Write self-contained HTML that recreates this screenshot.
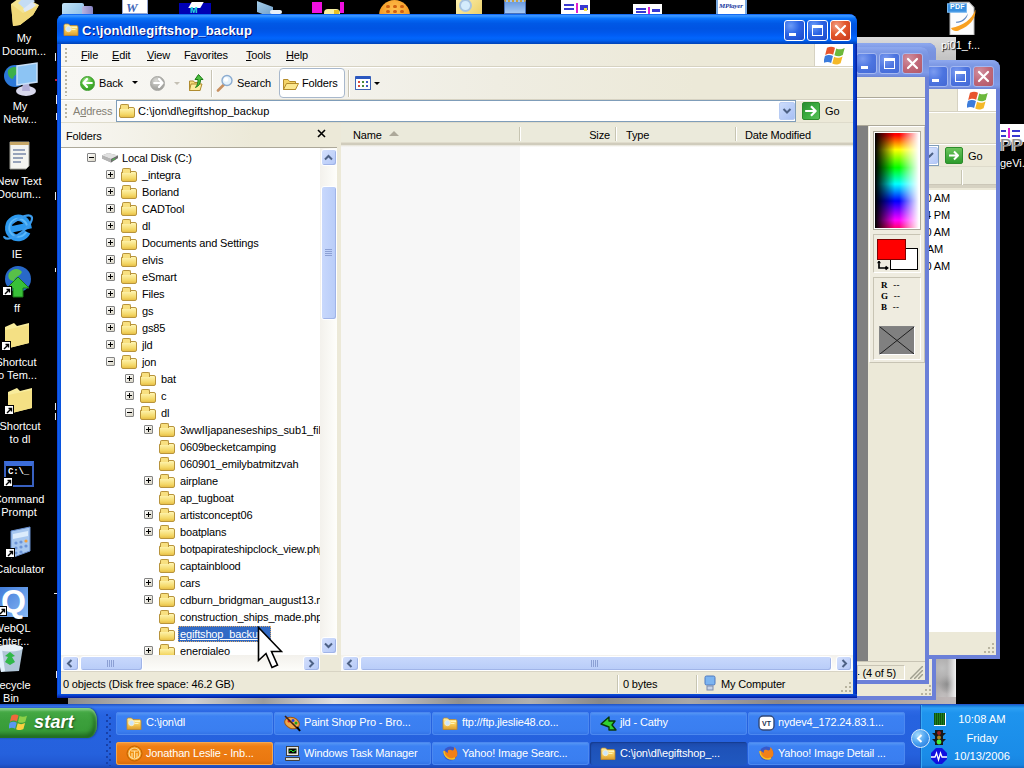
<!DOCTYPE html>
<html>
<head>
<meta charset="utf-8">
<title>C:\jon\dl\egiftshop_backup</title>
<style>
html,body{margin:0;padding:0}
body{width:1024px;height:768px;background:#000;overflow:hidden;position:relative;font:11px "Liberation Sans",sans-serif;color:#000}
div,span,svg,i,b,u.p{position:absolute;box-sizing:border-box}
.g{left:0;top:0;width:0;height:0}
.t{white-space:nowrap;line-height:13px;font-size:11px;letter-spacing:-.15px}
.dl{color:#fff;font-size:11px;line-height:13px;white-space:nowrap}
.pm{width:9px;height:9px;border:1px solid #848484;background:linear-gradient(135deg,#fff,#d8d4c4);border-radius:1px}
.pm i{left:1px;top:3px;width:5px;height:1px;background:#000}
.pm b{left:3px;top:1px;width:1px;height:5px;background:#000}
.fo{width:16px;height:11px;border:1px solid #b8943c;border-radius:2px;background:linear-gradient(#fff6b4,#f4d868 70%,#e8c048)}
.fo:before{content:"";position:absolute;left:0px;top:-4px;width:7px;height:4px;border:1px solid #b8943c;border-bottom:0;border-radius:2px 2px 0 0;background:#f8e080}
.cap{width:21px;height:21px;border:1px solid #fff;border-radius:3px}
.tb{height:27px;border-radius:3px;color:#fff;font-size:11px;background:linear-gradient(#5c9cf4,#3c81f3 18%,#3a7ef0 82%,#3070e4)}
.tb .t{left:34px;top:7px;color:#fff}
</style>
</head>
<body>
<svg width="0" height="0" style="left:0;top:0"><defs><linearGradient id="gf" x1="0" y1="0" x2="0" y2="1"><stop offset="0" stop-color="#fff2a8"/><stop offset=".55" stop-color="#f6cc58"/><stop offset="1" stop-color="#dc9c2c"/></linearGradient></defs></svg>
<!-- DESKTOP -->
<div class="g" id="desktop">
<div style="left:68px;top:37px;width:888px;height:694px;background:linear-gradient(180deg,#dcdcdc 0,#c4c4c4 3%,#a8a8a8 40%,#a09c9c 88%,#b0acac 93%,#a8a4a4 100%)"></div>
<div style="left:936px;top:659px;width:20px;height:46px;background:linear-gradient(90deg,rgba(255,255,255,0) 55%,rgba(255,255,255,.85) 100%),radial-gradient(circle at 30% 20%,#c0c0c0 0,rgba(192,192,192,0) 40%),radial-gradient(circle at 60% 55%,#8c8c8c 0,rgba(140,140,140,0) 35%),radial-gradient(circle at 35% 85%,#c4c0c0 0,rgba(196,192,192,0) 40%),#a8a6a6"></div>
<div style="left:68px;top:697px;width:888px;height:8px;background:linear-gradient(90deg,#8c8c8c 0,#b4b4b4 8%,#d0d0d0 14%,#9c9c9c 22%,#e0e0e0 30%,#c4c4c4 36%,#909090 44%,#b0b0b0 52%,#888 60%,#a8a8a8 70%,#8c8888 80%,#a49c9c 90%,#c0b8b8 100%)"></div>
<div style="left:62px;top:3px;width:22px;height:12px;background:linear-gradient(135deg,#c4e4f8,#8cc0e8);border-radius:2px 2px 0 0"></div><div style="left:82px;top:6px;width:11px;height:9px;background:linear-gradient(90deg,#b8b4e0,#8884c4);border-radius:2px 2px 0 0"></div>
<div style="left:122px;top:0;width:26px;height:14px;background:#fff;border:1px solid #98a8d0;border-top:0"></div><div class="t" style="left:126px;top:1px;font:italic bold 13px/13px 'Liberation Serif',serif;color:#4468b8">W</div>
<div style="left:179px;top:3px;width:32px;height:11px;background:#0000b4"></div><div style="left:190px;top:2px;width:12px;height:6px;background:#fff;transform:skewX(-30deg)"></div><div class="t" style="left:190px;top:6px;font:bold 9px/9px 'Liberation Sans',sans-serif;color:#28e0e0">M</div>
<div style="left:257px;top:4px;width:16px;height:11px;background:linear-gradient(135deg,#a4cce8,#6c9cc8);transform:skewY(20deg)"></div><div style="left:270px;top:10px;width:12px;height:4px;background:#e8f0f8;border-radius:2px"></div>
<div style="left:312px;top:2px;width:10px;height:11px;background:#f010e0"></div><div style="left:340px;top:2px;width:4px;height:11px;background:#f010e0"></div><div style="left:324px;top:9px;width:16px;height:5px;background:#f8f0a0;border-radius:4px 4px 0 0"></div><div style="left:334px;top:10px;width:5px;height:4px;background:#e8c020"></div>
<div style="left:379px;top:0;width:31px;height:31px;border-radius:16px;background:radial-gradient(circle at 50% 30%,#ffc050,#f49820 60%,#e88010)"></div>
<i style="left:386px;top:5px;width:4px;height:3px;background:#d06010;border-radius:2px"></i><i style="left:386px;top:10px;width:4px;height:3px;background:#d06010;border-radius:2px"></i>
<i style="left:393px;top:5px;width:4px;height:3px;background:#d06010;border-radius:2px"></i><i style="left:393px;top:10px;width:4px;height:3px;background:#d06010;border-radius:2px"></i>
<i style="left:400px;top:5px;width:4px;height:3px;background:#d06010;border-radius:2px"></i><i style="left:400px;top:10px;width:4px;height:3px;background:#d06010;border-radius:2px"></i>
<div style="left:456px;top:0;width:26px;height:14px;background:linear-gradient(135deg,#fcf0b0,#ecd068)"></div><div style="left:459px;top:-1px;width:13px;height:13px;border-radius:7px;background:#d4ecfc;border:2px solid #a8c4e0"></div>
<div style="left:504px;top:0;width:22px;height:14px;background:linear-gradient(#6c9ce0,#a4c8f4);border:1px solid #4870b8;border-top:2px dotted #c8a040"></div>
<div style="left:561px;top:0;width:29px;height:14px;background:#fff;border-top:3px solid #fff"></div><div style="left:564px;top:4px;width:10px;height:2px;background:#3838d0"></div><div style="left:564px;top:8px;width:10px;height:2px;background:#3838d0"></div><div style="left:576px;top:3px;width:2px;height:10px;background:#e020d0"></div><div style="left:580px;top:5px;width:8px;height:5px;background:#3838d0"></div><div style="left:584px;top:8px;width:3px;height:3px;background:#f0e040"></div>
<div style="left:633px;top:4px;width:29px;height:10px;background:#fff"></div><div style="left:636px;top:8px;width:10px;height:2px;background:#3838d0"></div><div style="left:636px;top:11px;width:10px;height:2px;background:#3838d0"></div><div style="left:648px;top:7px;width:2px;height:7px;background:#e020d0"></div><div style="left:652px;top:9px;width:8px;height:3px;background:#3838d0"></div>
<div style="left:716px;top:0;width:31px;height:14px;background:#fff;border:2px solid #78a8e0;border-top:0;border-bottom:0"></div><div class="t" style="left:719px;top:2px;font:italic bold 7px/8px 'Liberation Serif',serif;color:#1838a0">MPlayer</div>
<svg style="left:8px;top:-6px" width="34" height="34" viewBox="0 0 34 34"><path d="M3 10l11-8l17 9l-6 10l-13 10l-7 1z" fill="#f4e490"/><path d="M10 9l8-8l9 6l-9 9z" fill="#c4dcf4"/><path d="M15 15l9-7l4 3l-10 9z" fill="#dce8f8"/><path d="M3 10l12 9l16-8l-6 10l-13 10l-7 1z" fill="#f0d878"/></svg>
<div class="dl" style="left:-26px;top:32px;width:100px;text-align:center">My</div>
<div class="dl" style="left:-26px;top:45px;width:100px;text-align:center">Docum...</div>
<svg style="left:3px;top:62px" width="36" height="36" viewBox="0 0 36 36"><circle cx="12" cy="14" r="11" fill="#2c78d8"/><path d="M5 8c4-4 9-4 11 0c-1 5-5 4-6 9c-3 0-6-4-5-9z" fill="#3cb048"/><ellipse cx="23" cy="29" rx="10" ry="5" fill="#d8d8ec"/><path d="M20 20h6l1 9h-8z" fill="#b4b0d8"/><path d="M14 4l20-3v19l-20 3z" fill="#8cc4f4" stroke="#c8e0f8" stroke-width="1.500"/></svg>
<div class="dl" style="left:-30px;top:100px;width:100px;text-align:center">My</div>
<div class="dl" style="left:-30px;top:113px;width:100px;text-align:center">Netw...</div>
<svg style="left:8px;top:139px" width="24" height="31" viewBox="0 0 24 31"><path d="M2 3h19v24l-3 3h-16z" fill="#f4f4f0" stroke="#a0a098"/><path d="M2 3h19v3h-19z" fill="#c8a868"/><path d="M5 11h12M5 15h13M5 19h10M5 23h8" stroke="#7888a8" stroke-width="1.500"/></svg>
<div class="dl" style="left:-31px;top:175px;width:100px;text-align:center">New Text</div>
<div class="dl" style="left:-31px;top:188px;width:100px;text-align:center">Docum...</div>
<svg style="left:1px;top:210px" width="34" height="35" viewBox="0 0 34 35"><g transform="rotate(-12 17 19)"><path d="M25.500 24A10 10 0 1 1 27.500 18H9.500" stroke="#2c98ee" stroke-width="6.500" fill="none"/><path d="M24.500 23.500A9 9 0 1 1 26.500 17.500" stroke="#5cb8f8" stroke-width="2" fill="none"/></g><ellipse cx="17" cy="17" rx="17" ry="6.500" transform="rotate(-38 17 17)" fill="none" stroke="#3c9cec" stroke-width="2.200" stroke-dasharray="40 16 60"/></svg>
<div class="dl" style="left:-33px;top:248px;width:100px;text-align:center">IE</div>
<svg style="left:1px;top:265px" width="32" height="34" viewBox="0 0 32 34"><circle cx="17" cy="14" r="13" fill="#2868c8"/><path d="M8 8c4-5 10-5 13-1c-2 5-7 4-8 9c-4 0-7-3-5-8z" fill="#58c048"/><path d="M17 12l11 11h-6v9h-10v-9h-6z" fill="#38c038" stroke="#187818"/></svg>
<div style="left:2px;top:286px;width:10px;height:10px;background:#fff;border:1px solid #000"></div><svg style="left:4px;top:288px" width="7" height="7" viewBox="0 0 7 7"><path d="M1 6L5 2M2.500 1.500h3v3" stroke="#000" stroke-width="1.400" fill="none"/></svg>
<div class="dl" style="left:-33px;top:302px;width:100px;text-align:center">ff</div>
<svg style="left:3px;top:321px" width="28" height="29" viewBox="0 0 28 29"><path d="M2 6l9-4l3 3l12-3v20l-24 6z" fill="#f8ec9c"/><path d="M2 9l24-5v18l-24 6z" fill="#f4e084"/></svg>
<div style="left:1px;top:341px;width:10px;height:10px;background:#fff;border:1px solid #000"></div><svg style="left:3px;top:343px" width="7" height="7" viewBox="0 0 7 7"><path d="M1 6L5 2M2.500 1.500h3v3" stroke="#000" stroke-width="1.400" fill="none"/></svg>
<div class="dl" style="left:-34px;top:356px;width:100px;text-align:center">Shortcut</div>
<div class="dl" style="left:-34px;top:369px;width:100px;text-align:center">to Tem...</div>
<svg style="left:6px;top:386px" width="28" height="29" viewBox="0 0 28 29"><path d="M2 6l9-4l3 3l12-3v20l-24 6z" fill="#f8ec9c"/><path d="M2 9l24-5v18l-24 6z" fill="#f4e084"/></svg>
<div style="left:4px;top:405px;width:10px;height:10px;background:#fff;border:1px solid #000"></div><svg style="left:6px;top:407px" width="7" height="7" viewBox="0 0 7 7"><path d="M1 6L5 2M2.500 1.500h3v3" stroke="#000" stroke-width="1.400" fill="none"/></svg>
<div class="dl" style="left:-30px;top:420px;width:100px;text-align:center">Shortcut</div>
<div class="dl" style="left:-30px;top:433px;width:100px;text-align:center">to dl</div>
<div style="left:4px;top:461px;width:30px;height:26px;background:#000;border:2px solid #3860c0;border-top:5px solid #3c6cd8"></div><div class="t" style="left:8px;top:467px;color:#fff;font:bold 9px/11px 'Liberation Mono',monospace">C:\_</div>
<div style="left:3px;top:477px;width:10px;height:10px;background:#fff;border:1px solid #000"></div><svg style="left:5px;top:479px" width="7" height="7" viewBox="0 0 7 7"><path d="M1 6L5 2M2.500 1.500h3v3" stroke="#000" stroke-width="1.400" fill="none"/></svg>
<div class="dl" style="left:-31px;top:493px;width:100px;text-align:center">Command</div>
<div class="dl" style="left:-31px;top:506px;width:100px;text-align:center">Prompt</div>
<svg style="left:9px;top:526px" width="24" height="33" viewBox="0 0 24 33"><path d="M2 5l19-4v24l-19 7z" fill="#a8c8f0" stroke="#6890d0"/><path d="M4 8l15-3v5l-15 3z" fill="#dcecfc"/><g fill="#6c94d8"><circle cx="7" cy="17" r="1.600"/><circle cx="12" cy="16" r="1.600"/><circle cx="17" cy="15" r="1.600" fill="#f0a040"/><circle cx="7" cy="22" r="1.600"/><circle cx="12" cy="21" r="1.600"/><circle cx="17" cy="20" r="1.600"/><circle cx="7" cy="27" r="1.600"/><circle cx="12" cy="26" r="1.600"/></g></svg>
<div style="left:5px;top:548px;width:10px;height:10px;background:#fff;border:1px solid #000"></div><svg style="left:7px;top:550px" width="7" height="7" viewBox="0 0 7 7"><path d="M1 6L5 2M2.500 1.500h3v3" stroke="#000" stroke-width="1.400" fill="none"/></svg>
<div class="dl" style="left:-30px;top:563px;width:100px;text-align:center">Calculator</div>
<div style="left:-4px;top:587px;width:32px;height:30px;background:linear-gradient(135deg,#3c78d8,#88b8f4)"></div><div class="t" style="left:1px;top:585px;color:#fff;font:bold 32px/32px 'Liberation Sans',sans-serif">Q</div>
<div style="left:-3px;top:606px;width:10px;height:10px;background:#fff;border:1px solid #000"></div><svg style="left:-1px;top:608px" width="7" height="7" viewBox="0 0 7 7"><path d="M1 6L5 2M2.500 1.500h3v3" stroke="#000" stroke-width="1.400" fill="none"/></svg>
<div class="dl" style="left:-38px;top:622px;width:100px;text-align:center">WebQL</div>
<div class="dl" style="left:-38px;top:635px;width:100px;text-align:center">Enter...</div>
<svg style="left:-6px;top:643px" width="32" height="32" viewBox="0 0 32 32"><path d="M3 6l26-2l-4 24l-18 1z" fill="#c4dcf0" opacity=".9"/><ellipse cx="16" cy="5" rx="13" ry="3.500" fill="#e8f0f8"/><path d="M11 13l5-4l5 4l-3 1l3 5l-5 3l-5-3l3-5z" fill="#30b848"/><path d="M3 6l4 23l4-1l-3-22z" fill="#e4f0fc"/></svg>
<div class="dl" style="left:-39px;top:679px;width:100px;text-align:center">Recycle</div>
<div class="dl" style="left:-39px;top:692px;width:100px;text-align:center">Bin</div>
<i style="left:55px;top:53px;width:1px;height:8px;background:#e8e8e8"></i>
<i style="left:56px;top:95px;width:1px;height:9px;background:#e8e8e8"></i>
<i style="left:56px;top:113px;width:1px;height:7px;background:#e8e8e8"></i>
<i style="left:55px;top:192px;width:1px;height:8px;background:#e8e8e8"></i>
<i style="left:55px;top:268px;width:1px;height:4px;background:#e8e8e8"></i>
<i style="left:55px;top:403px;width:1px;height:7px;background:#e8e8e8"></i>
<i style="left:55px;top:413px;width:1px;height:7px;background:#e8e8e8"></i>
<i style="left:56px;top:671px;width:1px;height:7px;background:#e8e8e8"></i>
<i style="left:55px;top:79px;width:2px;height:2px;background:#c02040"></i><i style="left:54px;top:593px;width:3px;height:1px;background:#e8e8e8"></i>
<svg style="left:946px;top:-1px" width="34" height="36" viewBox="0 -1.500 34 34" preserveAspectRatio="none"><path d="M4 1.500h19l5 5v26h-24z" fill="#fcfcfc" stroke="#b8b8b8"/><path d="M5 26c2 4 7 3 9 1.500c9-3 16-10 15.500-19c-4 10-12 15-24.500 17.500z" fill="#f8a020"/><path d="M10 20c6 0 10-4 12-8c-1 6-6 9-12 9z" fill="#6088c0"/><rect x="1.500" y="3" width="19" height="8" fill="#3890e0" stroke="#78b8f0"/></svg>
<div class="t" style="left:950px;top:3px;color:#fff;font:bold 7px/8px 'Liberation Sans',sans-serif;letter-spacing:.3px">PDF</div>
<div class="dl" style="left:941px;top:39px;text-shadow:1px 1px 1px #000">pi01_f...</div>
<div style="left:1000px;top:124px;width:24px;height:18px;background:#fff;border-top:2px solid #fff"></div><div style="left:1001px;top:130px;width:5px;height:2px;background:#3838d0"></div><div style="left:1001px;top:135px;width:5px;height:2px;background:#3838d0"></div><div style="left:1008px;top:128px;width:2px;height:10px;background:#e020d0"></div><div style="left:1012px;top:130px;width:8px;height:2px;background:#3838d0"></div><div style="left:1012px;top:135px;width:8px;height:2px;background:#3838d0"></div>
<div class="t" style="left:1000px;top:137px;color:#8c8c8c;font:17px/17px 'Liberation Sans',sans-serif;text-shadow:1px 0 0 #e0e0e0,-1px 0 0 #e0e0e0">PP</div>
<div class="dl" style="left:1000px;top:157px">geVi...</div>
</div>
<!-- BACKGROUND WINDOWS -->
<div class="g" id="back">
<div style="left:700px;top:43px;width:236px;height:657px;border-radius:8px 8px 0 0;background:#6b80d8"></div>
<div style="left:700px;top:43px;width:236px;height:30px;border-radius:8px 8px 0 0;background:linear-gradient(#8ca8ee 0,#8aa4ec 6%,#7f9be6 14%,#7994e0 30%,#7791de 50%,#7a96e2 70%,#7e9ae8 85%,#7690e0 94%,#6c84d4 100%)"></div>
<div style="left:704px;top:73px;width:228px;height:623px;background:#ece9d8"></div>
<i style="left:929px;top:685px;width:2px;height:2px;background:#b8b4a0"></i>
<i style="left:925px;top:689px;width:2px;height:2px;background:#b8b4a0"></i>
<i style="left:929px;top:689px;width:2px;height:2px;background:#b8b4a0"></i>
<i style="left:921px;top:693px;width:2px;height:2px;background:#b8b4a0"></i>
<i style="left:925px;top:693px;width:2px;height:2px;background:#b8b4a0"></i>
<i style="left:929px;top:693px;width:2px;height:2px;background:#b8b4a0"></i>
<div style="left:800px;top:60px;width:200px;height:599px;border-radius:8px 8px 0 0;background:#6b80d8"></div>
<div style="left:800px;top:60px;width:200px;height:29px;border-radius:8px 8px 0 0;background:linear-gradient(#8ca8ee 0,#8aa4ec 6%,#7f9be6 14%,#7994e0 30%,#7791de 50%,#7a96e2 70%,#7e9ae8 85%,#7690e0 94%,#6c84d4 100%)"></div>
<div class="cap" style="left:973px;top:66px;background:radial-gradient(circle at 30% 25%,#d090a0 0,#c06878 50%,#b05868 100%);border-color:#a4b8f0"><svg style="left:3px;top:3px" width="13" height="13" viewBox="0 0 13 13"><path d="M2 2l9 9M11 2l-9 9" stroke="#fff" stroke-width="2.200" stroke-linecap="round"/></svg></div><div class="cap" style="left:950px;top:66px;background:radial-gradient(circle at 30% 25%,#7c9cf0 0,#4c74e0 50%,#4468d4 100%);border-color:#a4b8f0"><i style="left:4px;top:4px;width:11px;height:11px;border:1px solid #fff;border-top-width:3px"></i></div><div class="cap" style="left:927px;top:66px;background:radial-gradient(circle at 30% 25%,#7c9cf0 0,#4c74e0 50%,#4468d4 100%);border-color:#a4b8f0"><i style="left:4px;top:12px;width:7px;height:3px;background:#fff"></i></div>
<div style="left:804px;top:89px;width:192px;height:566px;background:#ece9d8"></div>
<div style="left:957px;top:89px;width:39px;height:22px;background:#fff;border-left:1px solid #d6d2c2"></div>
<svg style="left:967px;top:90px" width="22" height="20" viewBox="0 0 19 17.500"><path d="M2.500 2.500c3-1.500 5-1 7 0l-1.600 6c-2-1-4-1.400-7 .2z" fill="#e8552c"/><path d="M10.600 3c2 1 4.500 1.300 7.400-.3l-1.700 6c-3 1.600-5 1.200-7.300.2z" fill="#6cb83c"/><path d="M.700 9.700c3-1.500 5-1.100 7 0l-1.600 6c-2-1-4-1.400-7 .2z" fill="#3c7cdc"/><path d="M8.700 10.300c2 1 4.500 1.300 7.400-.3l-1.700 6c-3 1.600-5 1.200-7.300.2z" fill="#f4b828"/></svg>
<div style="left:804px;top:111px;width:192px;height:1px;background:#d6d2c2"></div><div style="left:804px;top:112px;width:192px;height:1px;background:#fff"></div>
<div style="left:804px;top:143px;width:192px;height:1px;background:#d6d2c2"></div><div style="left:804px;top:144px;width:192px;height:1px;background:#fff"></div>
<div style="left:804px;top:145px;width:135px;height:21px;border:1px solid #7f9db9;background:#fff"></div>
<div style="left:921px;top:147px;width:17px;height:17px;border-radius:2px;border:1px solid #b4c8f4;background:linear-gradient(135deg,#e0e8fc,#b4c8f8)"></div>
<svg style="left:925px;top:152px" width="9" height="7" viewBox="0 0 9 7"><path d="M1 1l3.500 3.500L8 1" stroke="#4d6185" stroke-width="2" fill="none"/></svg>
<div style="left:945px;top:147px;width:18px;height:17px;border-radius:2px;border:1px solid #2c8c2c;background:linear-gradient(#6cc45c,#2c9c2c)"></div>
<svg style="left:948px;top:150px" width="12" height="11" viewBox="0 0 12 11"><path d="M1 5.500h9M6 1.500l4 4l-4 4" stroke="#fff" stroke-width="2" fill="none" stroke-linejoin="round"/></svg>
<div class="t" style="left:968px;top:150px">Go</div>
<div style="left:804px;top:166px;width:192px;height:1px;background:#dedbcb"></div>
<div style="left:804px;top:167px;width:192px;height:21px;background:#ebeadb;border-bottom:3px solid #d6d2c2;box-shadow:inset 0 -1px 0 #cbc7b8"></div>
<div style="left:961px;top:170px;width:1px;height:15px;background:#c7c5b2"></div><div style="left:962px;top:170px;width:1px;height:15px;background:#fff"></div>
<div style="left:804px;top:190px;width:192px;height:442px;background:#fff"></div>
<div class="t" style="left:890px;top:192px;width:60px;text-align:right">10:00 AM</div>
<div class="t" style="left:890px;top:209px;width:60px;text-align:right">12:34 PM</div>
<div class="t" style="left:890px;top:226px;width:60px;text-align:right">10:00 AM</div>
<div class="t" style="left:883px;top:243px;width:60px;text-align:right">9:10 AM</div>
<div class="t" style="left:890px;top:260px;width:60px;text-align:right">10:00 AM</div>
<i style="left:992px;top:643px;width:2px;height:2px;background:#b8b4a0"></i>
<i style="left:988px;top:647px;width:2px;height:2px;background:#b8b4a0"></i>
<i style="left:992px;top:647px;width:2px;height:2px;background:#b8b4a0"></i>
<i style="left:984px;top:651px;width:2px;height:2px;background:#b8b4a0"></i>
<i style="left:988px;top:651px;width:2px;height:2px;background:#b8b4a0"></i>
<i style="left:992px;top:651px;width:2px;height:2px;background:#b8b4a0"></i>
<div style="left:740px;top:47px;width:189px;height:637px;border-radius:8px 8px 0 0;background:#6b80d8"></div>
<div style="left:740px;top:47px;width:189px;height:30px;border-radius:8px 8px 0 0;background:linear-gradient(#8ca8ee 0,#8aa4ec 6%,#7f9be6 14%,#7994e0 30%,#7791de 50%,#7a96e2 70%,#7e9ae8 85%,#7690e0 94%,#6c84d4 100%)"></div>
<div class="cap" style="left:902px;top:53px;background:radial-gradient(circle at 30% 25%,#d090a0 0,#c06878 50%,#b05868 100%);border-color:#a4b8f0"><svg style="left:3px;top:3px" width="13" height="13" viewBox="0 0 13 13"><path d="M2 2l9 9M11 2l-9 9" stroke="#fff" stroke-width="2.200" stroke-linecap="round"/></svg></div><div class="cap" style="left:879px;top:53px;background:radial-gradient(circle at 30% 25%,#7c9cf0 0,#4c74e0 50%,#4468d4 100%);border-color:#a4b8f0"><i style="left:4px;top:4px;width:11px;height:11px;border:1px solid #fff;border-top-width:3px"></i></div><div class="cap" style="left:856px;top:53px;background:radial-gradient(circle at 30% 25%,#7c9cf0 0,#4c74e0 50%,#4468d4 100%);border-color:#a4b8f0"><i style="left:4px;top:12px;width:7px;height:3px;background:#fff"></i></div>
<div style="left:744px;top:77px;width:181px;height:603px;background:#ece9d8"></div>
<div style="left:744px;top:97px;width:181px;height:1px;background:#aca899"></div><div style="left:744px;top:98px;width:181px;height:1px;background:#fff"></div>
<div style="left:744px;top:125px;width:181px;height:1px;background:#aca899"></div>
<div style="left:744px;top:126px;width:124px;height:535px;background:#808080"></div>
<div style="left:869px;top:126px;width:56px;height:237px;background:#efece0;border:1px solid #fff;border-right-color:#c8c4b4;border-bottom-color:#c8c4b4"></div>
<div style="left:873px;top:131px;width:48px;height:99px;border:1px solid #aca899;background:#fff"></div>
<div style="left:875px;top:133px;width:44px;height:95px;background:linear-gradient(90deg,#000 0,rgba(0,0,0,0) 45%,rgba(255,255,255,0) 55%,#fff 100%),linear-gradient(180deg,#f00 0,#f00 2%,#ff0 17.600%,#0f0 36.500%,#0ff 53.700%,#00f 71.600%,#f0f 91.600%,#ff0070 100%)"></div>
<div style="left:873px;top:234px;width:48px;height:39px;border:1px solid #c8c4b4;border-right-color:#fff;border-bottom-color:#fff"></div>
<div style="left:890px;top:248px;width:28px;height:22px;background:#fff;border:1px solid #000"></div>
<div style="left:877px;top:239px;width:29px;height:21px;background:#f00;border:1px solid #800000"></div>
<svg style="left:877px;top:261px" width="12" height="10" viewBox="0 0 12 10"><path d="M2 1v6h8M1 2.500l1-2l1 2M8.500 5.500l2 1.500l-2 1.500" stroke="#000" stroke-width="1.700" fill="none"/></svg>
<div style="left:873px;top:277px;width:48px;height:83px;border:1px solid #c8c4b4;border-right-color:#fff;border-bottom-color:#fff"></div>
<div class="t" style="left:881px;top:280px;font:bold 9px/11px 'Liberation Serif',serif;letter-spacing:.4px">R&nbsp; --</div>
<div class="t" style="left:881px;top:291px;font:bold 9px/11px 'Liberation Serif',serif;letter-spacing:.4px">G&nbsp; --</div>
<div class="t" style="left:881px;top:302px;font:bold 9px/11px 'Liberation Serif',serif;letter-spacing:.4px">B&nbsp; --</div>
<div style="left:879px;top:326px;width:36px;height:29px;background:#808080;border:1px solid #fff;border-top-color:#848484;border-left-color:#848484"></div>
<svg style="left:880px;top:327px" width="34" height="27" viewBox="0 0 34 27"><path d="M0 0L34 27M34 0L0 27" stroke="#202020" stroke-width="1"/></svg>
<div style="left:744px;top:661px;width:181px;height:19px;background:#ece9d8;border-top:1px solid #c8c4b4"></div>
<div class="t" style="left:856px;top:667px">- (4 of 5)</div>
<div style="left:857px;top:665px;width:48px;height:15px;border:1px solid #c8c4b4;border-right-color:#fff;border-bottom-color:#fff"></div>
<svg style="left:910px;top:666px" width="13" height="13" viewBox="0 0 13 13"><path d="M13 0L0 13" stroke="#a0a090" stroke-width="1.500"/></svg>
<svg style="left:914px;top:670px" width="9" height="9" viewBox="0 0 9 9"><path d="M9 0L0 9" stroke="#a0a090" stroke-width="1.500"/></svg>
<svg style="left:918px;top:674px" width="5" height="5" viewBox="0 0 5 5"><path d="M5 0L0 5" stroke="#a0a090" stroke-width="1.500"/></svg>
</div>
<!-- MAIN WINDOW -->
<div class="g" id="win">
<div style="left:57px;top:14px;width:800px;height:684px;border-radius:8px 8px 0 0;background:#0831d9"></div>
<div style="left:57px;top:44px;width:4px;height:654px;background:linear-gradient(90deg,#0831d9,#1262ec 30%,#0a58e2 70%,#0852de)"></div>
<div style="left:853px;top:44px;width:4px;height:654px;background:linear-gradient(90deg,#0a52dc,#0840cc 35%,#062cb8 70%,#001c9c)"></div>
<div style="left:57px;top:694px;width:800px;height:4px;background:linear-gradient(#0a52dc,#0840cc 35%,#062cb8 70%,#001c9c)"></div>
<div style="left:57px;top:14px;width:800px;height:30px;border-radius:8px 8px 0 0;background:linear-gradient(#0058ee 0,#3a94ff 5%,#2b8dff 9%,#0c76fc 14%,#0364f0 22%,#0058e6 32%,#0054e3 48%,#0057ea 60%,#005cf4 70%,#0265fc 80%,#0060f0 88%,#0050d4 94%,#0042b4 100%)"></div>
<svg style="left:63px;top:22px" width="16" height="15" viewBox="0 0 16 15"><path d="M1 3.500q0-1.500 1.500-1.500h3l1.500 1.500h6.500q1.500 0 1.500 1.500v8.500h-14z" fill="url(#gf)" stroke="#c08828" stroke-width=".8"/><path d="M8.500 5.500h5.500M8.500 7.500h4" stroke="#fff4b8" stroke-width="1"/><circle cx="5.500" cy="7" r="2.700" fill="#cce6fa" stroke="#f4ecd0" stroke-width="1"/></svg>
<div class="t" style="left:82px;top:23px;color:#fff;font:bold 13px/15px 'Liberation Sans',sans-serif;text-shadow:1px 1px 0 #0a1883;letter-spacing:.12px">C:\jon\dl\egiftshop_backup</div>
<div class="cap" style="left:784px;top:20px;background:radial-gradient(circle at 30% 25%,#6c9cf8 0,#2c64e4 45%,#1c48c8 100%)">
<i style="left:4px;top:12px;width:7px;height:3px;background:#fff"></i>
</div>
<div class="cap" style="left:807px;top:20px;background:radial-gradient(circle at 30% 25%,#6c9cf8 0,#2c64e4 45%,#1c48c8 100%)">
<i style="left:4px;top:4px;width:11px;height:11px;border:1px solid #fff;border-top-width:3px"></i>
</div>
<div class="cap" style="left:830px;top:20px;background:radial-gradient(circle at 30% 25%,#f0a088 0,#e4582c 45%,#c4361c 100%)">
<svg style="left:3px;top:3px" width="13" height="13" viewBox="0 0 13 13"><path d="M2 2l9 9M11 2l-9 9" stroke="#fff" stroke-width="2.2" stroke-linecap="round"/></svg>
</div>
<div style="left:61px;top:44px;width:792px;height:650px;background:#ece9d8"></div>
<div style="left:61px;top:44px;width:792px;height:79px;background:linear-gradient(90deg,#f8f7f3 0,#f4f3ee 30%,#efede2 55%,#ece9d8 80%)"></div>
<div style="left:61px;top:66px;width:792px;height:1px;background:#d6d2c2"></div>
<div style="left:61px;top:67px;width:792px;height:1px;background:#fff"></div>
<div style="left:61px;top:99px;width:792px;height:1px;background:#d6d2c2"></div>
<div style="left:61px;top:100px;width:792px;height:1px;background:#fff"></div>
<div style="left:65px;top:48px;width:2px;height:15px;background:repeating-linear-gradient(#bab6a4 0,#bab6a4 2px,transparent 2px,transparent 4px)"></div>
<div style="left:65px;top:71px;width:2px;height:25px;background:repeating-linear-gradient(#bab6a4 0,#bab6a4 2px,transparent 2px,transparent 4px)"></div>
<div style="left:65px;top:104px;width:2px;height:15px;background:repeating-linear-gradient(#bab6a4 0,#bab6a4 2px,transparent 2px,transparent 4px)"></div>
<div class="t" style="left:81px;top:49px"><u>F</u>ile</div>
<div class="t" style="left:112px;top:49px"><u>E</u>dit</div>
<div class="t" style="left:147px;top:49px"><u>V</u>iew</div>
<div class="t" style="left:184px;top:49px">F<u>a</u>vorites</div>
<div class="t" style="left:246px;top:49px"><u>T</u>ools</div>
<div class="t" style="left:286px;top:49px"><u>H</u>elp</div>
<div style="left:814px;top:44px;width:39px;height:22px;background:#fff;border-left:1px solid #d6d2c2"></div>
<svg style="left:824px;top:45px" width="22" height="20" viewBox="0 0 19 17.500"><path d="M2.5 2.5c3-1.5 5-1 7 0l-1.6 6c-2-1-4-1.4-7 .2z" fill="#e8552c"/><path d="M10.6 3c2 1 4.5 1.3 7.4-.3l-1.7 6c-3 1.600-5 1.200-7.300.2z" fill="#6cb83c"/><path d="M.7 9.700c3-1.500 5-1.100 7 0l-1.600 6c-2-1-4-1.400-7 .2z" fill="#3c7cdc"/><path d="M8.700 10.300c2 1 4.500 1.300 7.400-.3l-1.700 6c-3 1.600-5 1.200-7.300.2z" fill="#f4b828"/></svg>
<div style="left:80px;top:76px;width:15px;height:15px;border-radius:8px;background:radial-gradient(circle at 40% 30%,#b4ec9c 0,#4cb834 45%,#2c8c1c 100%);border:1px solid #3c9c2c"></div>
<svg style="left:82px;top:78px" width="11" height="10" viewBox="0 0 11 10"><path d="M5 1L1.500 5L5 9M1.800 5h8" stroke="#fff" stroke-width="2.200" fill="none" stroke-linejoin="round" stroke-linecap="round"/></svg>
<div class="t" style="left:99px;top:77px">Back</div>
<div style="left:132px;top:81px;width:0;height:0;border:3px solid transparent;border-top:3px solid #000;border-bottom:0"></div>
<div style="left:150px;top:76px;width:15px;height:15px;border-radius:8px;background:radial-gradient(circle at 40% 30%,#dcdcd8 0,#acaca8 55%,#989894 100%);border:1px solid #a4a4a0"></div>
<svg style="left:153px;top:78px" width="11" height="10" viewBox="0 0 11 10"><path d="M6 1L9.500 5L6 9M9.200 5h-8" stroke="#fff" stroke-width="2.200" fill="none" stroke-linejoin="round" stroke-linecap="round"/></svg>
<div style="left:174px;top:82px;width:0;height:0;border:3px solid transparent;border-top:3px solid #c4c0b4;border-bottom:0"></div>
<svg style="left:188px;top:73px" width="17" height="19" viewBox="0 0 17 19"><path d="M1.500 8h4l1 1.500h5.500v8h-10.500z" fill="#f4dc78" stroke="#b08c30"/><path d="M3 11h11l-2 6.500h-10.500z" fill="#fcec9c" stroke="#b08c30"/><path d="M10.500 1.500l4.500 5h-2.500c0 4-1.500 6.500-5 8c2-2.500 2.500-4.500 2.500-8h-3z" fill="#4cc040" stroke="#1c7c14"/></svg>
<div style="left:211px;top:70px;width:1px;height:27px;background:#c8c4b4"></div>
<div style="left:212px;top:70px;width:1px;height:27px;background:#fff"></div>
<svg style="left:216px;top:74px" width="18" height="18" viewBox="0 0 18 18"><path d="M8 10.500L2 16.500" stroke="#c89060" stroke-width="2.600" stroke-linecap="round"/><circle cx="11" cy="6.500" r="5" fill="#e4f2fc" stroke="#8cacd0" stroke-width="1.400"/><circle cx="10" cy="5.500" r="2.200" fill="#fff"/></svg>
<div class="t" style="left:237px;top:77px">Search</div>
<div style="left:279px;top:68px;width:66px;height:30px;border:1px solid #a8b8cc;border-radius:4px;background:#fff"></div>
<svg style="left:282px;top:76px" width="18" height="16" viewBox="0 0 18 16"><path d="M1.500 3.500h4.500l1.500 2h6v8h-12z" fill="#f4d468" stroke="#b48c2c"/><path d="M4.500 7.500h12l-3 6h-12z" fill="#fce890" stroke="#b48c2c"/></svg>
<div class="t" style="left:302px;top:77px">Folders</div>
<div style="left:348px;top:70px;width:1px;height:27px;background:#c8c4b4"></div>
<div style="left:349px;top:70px;width:1px;height:27px;background:#fff"></div>
<div style="left:355px;top:76px;width:16px;height:14px;border:1px solid #3c64b4;border-top:3px solid #2c58c0;border-radius:1px;background:#fff"></div>
<i style="left:358px;top:81px;width:2px;height:2px;background:#d84c3c"></i>
<i style="left:362px;top:81px;width:2px;height:2px;background:#4c8c3c"></i>
<i style="left:366px;top:81px;width:2px;height:2px;background:#3c5cc4"></i>
<i style="left:358px;top:85px;width:2px;height:2px;background:#d84c3c"></i>
<i style="left:362px;top:85px;width:2px;height:2px;background:#4c8c3c"></i>
<i style="left:366px;top:85px;width:2px;height:2px;background:#3c5cc4"></i>
<div style="left:374px;top:82px;width:0;height:0;border:3px solid transparent;border-top:3px solid #000;border-bottom:0"></div>
<div class="t" style="left:73px;top:105px;color:#848074">A<u>d</u>dress</div>
<div style="left:116px;top:100px;width:680px;height:22px;border:1px solid #7f9db9;background:#fff"></div>
<div class="fo" style="left:119px;top:107px"></div>
<div class="t" style="left:138px;top:105px;letter-spacing:.07px">C:\jon\dl\egiftshop_backup</div>
<div style="left:779px;top:102px;width:16px;height:18px;border-radius:2px;border:1px solid #b8ccf4;background:linear-gradient(135deg,#ccdcfc,#a8c0f4)"></div>
<svg style="left:782px;top:108px" width="10" height="7" viewBox="0 0 9 7"><path d="M1 1l3.500 3.500L8 1" stroke="#4d6185" stroke-width="2" fill="none"/></svg>
<div style="left:802px;top:102px;width:18px;height:18px;border-radius:2px;border:1px solid #2c8c2c;background:linear-gradient(135deg,#288c30,#3cac40 50%,#58c058)"></div>
<svg style="left:804px;top:104px" width="14" height="14" viewBox="0 0 12 11"><path d="M1 5.500h9M6 1.500l4 4l-4 4" stroke="#fff" stroke-width="1.900" fill="none" stroke-linejoin="round"/></svg>
<div class="t" style="left:825px;top:105px">Go</div>
<div style="left:61px;top:122px;width:792px;height:1px;background:#dedbcb"></div>
<div style="left:61px;top:123px;width:276px;height:24px;background:linear-gradient(90deg,#f8f7f3,#ece9d8 70%)"></div>
<div style="left:61px;top:147px;width:276px;height:1px;background:#aca899"></div>
<div class="t" style="left:66px;top:130px">Folders</div>
<svg style="left:317px;top:129px" width="9" height="9" viewBox="0 0 9 9"><path d="M1 1l7 7M8 1l-7 7" stroke="#000" stroke-width="1.600"/></svg>
<div style="left:61px;top:148px;width:259px;height:507px;background:#fff;overflow:hidden">
<div class="pm" style="left:26px;top:5px"><i></i></div>
<svg style="left:40px;top:4px" width="18" height="11" viewBox="0 0 18 11"><path d="M1 3.500l6-2.500l10 2.500v2.500l-7 4.500l-9-4z" fill="#9c9c9c"/><path d="M1 3.500l6-2.500l10 2.500l-7 3.500z" fill="#e0e0e0"/><path d="M1 3.500l9 3.500v3.500l-9-4z" fill="#b4b4b4"/><path d="M10 7l7-3.500v2.500l-7 4.500z" fill="#6c6c6c"/><path d="M11.500 8l2.500-1.500" stroke="#40d040" stroke-width="1"/></svg>
<div class="t" style="left:61px;top:4px">Local Disk (C:)</div>
<div class="pm" style="left:45px;top:22px"><i></i><b></b></div>
<div class="fo" style="left:60px;top:23px"></div>
<div class="t" style="left:81px;top:21px">_integra</div>
<div class="pm" style="left:45px;top:39px"><i></i><b></b></div>
<div class="fo" style="left:60px;top:40px"></div>
<div class="t" style="left:81px;top:38px">Borland</div>
<div class="pm" style="left:45px;top:56px"><i></i><b></b></div>
<div class="fo" style="left:60px;top:57px"></div>
<div class="t" style="left:81px;top:55px">CADTool</div>
<div class="pm" style="left:45px;top:73px"><i></i><b></b></div>
<div class="fo" style="left:60px;top:74px"></div>
<div class="t" style="left:81px;top:72px">dl</div>
<div class="pm" style="left:45px;top:90px"><i></i><b></b></div>
<div class="fo" style="left:60px;top:91px"></div>
<div class="t" style="left:81px;top:89px">Documents and Settings</div>
<div class="pm" style="left:45px;top:107px"><i></i><b></b></div>
<div class="fo" style="left:60px;top:108px"></div>
<div class="t" style="left:81px;top:106px">elvis</div>
<div class="pm" style="left:45px;top:124px"><i></i><b></b></div>
<div class="fo" style="left:60px;top:125px"></div>
<div class="t" style="left:81px;top:123px">eSmart</div>
<div class="pm" style="left:45px;top:141px"><i></i><b></b></div>
<div class="fo" style="left:60px;top:142px"></div>
<div class="t" style="left:81px;top:140px">Files</div>
<div class="pm" style="left:45px;top:158px"><i></i><b></b></div>
<div class="fo" style="left:60px;top:159px"></div>
<div class="t" style="left:81px;top:157px">gs</div>
<div class="pm" style="left:45px;top:175px"><i></i><b></b></div>
<div class="fo" style="left:60px;top:176px"></div>
<div class="t" style="left:81px;top:174px">gs85</div>
<div class="pm" style="left:45px;top:192px"><i></i><b></b></div>
<div class="fo" style="left:60px;top:193px"></div>
<div class="t" style="left:81px;top:191px">jld</div>
<div class="pm" style="left:45px;top:209px"><i></i></div>
<div class="fo" style="left:60px;top:210px"></div>
<div class="t" style="left:81px;top:208px">jon</div>
<div class="pm" style="left:64px;top:226px"><i></i><b></b></div>
<div class="fo" style="left:79px;top:227px"></div>
<div class="t" style="left:100px;top:225px">bat</div>
<div class="pm" style="left:64px;top:243px"><i></i><b></b></div>
<div class="fo" style="left:79px;top:244px"></div>
<div class="t" style="left:100px;top:242px">c</div>
<div class="pm" style="left:64px;top:260px"><i></i></div>
<div class="fo" style="left:79px;top:261px"></div>
<div class="t" style="left:100px;top:259px">dl</div>
<div class="pm" style="left:83px;top:277px"><i></i><b></b></div>
<div class="fo" style="left:98px;top:278px"></div>
<div class="t" style="left:119px;top:276px;letter-spacing:-.06px">3wwIIjapaneseships_sub1_files</div>
<div class="fo" style="left:98px;top:295px"></div>
<div class="t" style="left:119px;top:293px">0609becketcamping</div>
<div class="fo" style="left:98px;top:312px"></div>
<div class="t" style="left:119px;top:310px">060901_emilybatmitzvah</div>
<div class="pm" style="left:83px;top:328px"><i></i><b></b></div>
<div class="fo" style="left:98px;top:329px"></div>
<div class="t" style="left:119px;top:327px">airplane</div>
<div class="fo" style="left:98px;top:346px"></div>
<div class="t" style="left:119px;top:344px">ap_tugboat</div>
<div class="pm" style="left:83px;top:362px"><i></i><b></b></div>
<div class="fo" style="left:98px;top:363px"></div>
<div class="t" style="left:119px;top:361px">artistconcept06</div>
<div class="pm" style="left:83px;top:379px"><i></i><b></b></div>
<div class="fo" style="left:98px;top:380px"></div>
<div class="t" style="left:119px;top:378px">boatplans</div>
<div class="fo" style="left:98px;top:397px"></div>
<div class="t" style="left:119px;top:395px">botpapirateshipclock_view.php_files</div>
<div class="fo" style="left:98px;top:414px"></div>
<div class="t" style="left:119px;top:412px">captainblood</div>
<div class="pm" style="left:83px;top:430px"><i></i><b></b></div>
<div class="fo" style="left:98px;top:431px"></div>
<div class="t" style="left:119px;top:429px">cars</div>
<div class="pm" style="left:83px;top:447px"><i></i><b></b></div>
<div class="fo" style="left:98px;top:448px"></div>
<div class="t" style="left:119px;top:446px">cdburn_bridgman_august13.mht_files</div>
<div class="fo" style="left:98px;top:465px"></div>
<div class="t" style="left:119px;top:463px">construction_ships_made.php_files</div>
<div class="fo" style="left:98px;top:482px"></div>
<div style="left:117px;top:478px;width:93px;height:16px;background:#316ac5;border:1px dotted #d8a868"></div>
<div class="t" style="left:119px;top:480px;color:#fff;text-decoration:underline">egiftshop_backup</div>
<div class="pm" style="left:83px;top:498px"><i></i><b></b></div>
<div class="fo" style="left:98px;top:499px"></div>
<div class="t" style="left:119px;top:497px">energialeo</div>
</div>
<div style="left:320px;top:148px;width:17px;height:507px;background:linear-gradient(90deg,#f3f1ec,#fefefb)"></div>
<div style="left:321px;top:149px;width:16px;height:17px;border:1px solid #fff;border-radius:3px;background:linear-gradient(135deg,#d4e0fc,#b4c8f8);box-shadow:inset -1px -1px 0 #a0b4e8"></div><svg style="left:324px;top:154px" width="9" height="7" viewBox="0 0 9 7"><path d="M1 5.500l3.500-3.500l3.500 3.500" stroke="#4d6185" stroke-width="2" fill="none"/></svg>
<div style="left:321px;top:637px;width:16px;height:17px;border:1px solid #fff;border-radius:3px;background:linear-gradient(135deg,#d4e0fc,#b4c8f8);box-shadow:inset -1px -1px 0 #a0b4e8"></div><svg style="left:324px;top:642px" width="9" height="7" viewBox="0 0 9 7"><path d="M1 1.500l3.500 3.500l3.500-3.500" stroke="#4d6185" stroke-width="2" fill="none"/></svg>
<div style="left:321px;top:186px;width:16px;height:134px;border:1px solid #fff;border-radius:3px;background:linear-gradient(90deg,#c8d8fc,#b8ccf8);box-shadow:inset -1px -1px 0 #a0b4e8"></div>
<i style="left:325px;top:249px;width:7px;height:1px;background:#8ca0d4"></i>
<i style="left:325px;top:251px;width:7px;height:1px;background:#8ca0d4"></i>
<i style="left:325px;top:253px;width:7px;height:1px;background:#8ca0d4"></i>
<i style="left:325px;top:255px;width:7px;height:1px;background:#8ca0d4"></i>
<div style="left:61px;top:655px;width:276px;height:17px;background:linear-gradient(#f3f1ec,#fefefb)"></div>
<div style="left:320px;top:655px;width:17px;height:17px;background:#ece9d8"></div>
<div style="left:62px;top:656px;width:17px;height:15px;border:1px solid #fff;border-radius:3px;background:linear-gradient(135deg,#d4e0fc,#b4c8f8);box-shadow:inset -1px -1px 0 #a0b4e8"></div><svg style="left:66px;top:659px" width="8" height="9" viewBox="0 0 8 9"><path d="M5.500 1l-3.500 3.500l3.500 3.500" stroke="#4d6185" stroke-width="2" fill="none"/></svg>
<div style="left:303px;top:656px;width:17px;height:15px;border:1px solid #fff;border-radius:3px;background:linear-gradient(135deg,#d4e0fc,#b4c8f8);box-shadow:inset -1px -1px 0 #a0b4e8"></div><svg style="left:307px;top:659px" width="8" height="9" viewBox="0 0 8 9"><path d="M2.500 1l3.500 3.500l-3.500 3.500" stroke="#4d6185" stroke-width="2" fill="none"/></svg>
<div style="left:80px;top:656px;width:63px;height:15px;border:1px solid #fff;border-radius:3px;background:linear-gradient(#c8d8fc,#b8ccf8);box-shadow:inset -1px -1px 0 #a0b4e8"></div>
<i style="left:107px;top:660px;width:1px;height:7px;background:#8ca0d4"></i>
<i style="left:109px;top:660px;width:1px;height:7px;background:#8ca0d4"></i>
<i style="left:111px;top:660px;width:1px;height:7px;background:#8ca0d4"></i>
<i style="left:113px;top:660px;width:1px;height:7px;background:#8ca0d4"></i>
<div style="left:341px;top:123px;width:512px;height:549px;background:#fff"></div>
<div style="left:341px;top:144px;width:179px;height:511px;background:#f7f7f7"></div>
<div style="left:341px;top:123px;width:512px;height:22px;background:#ebeadb;border-bottom:2px solid #d0ccbc;box-shadow:inset 0 -1px 0 #e0dccc"></div>
<div style="left:341px;top:145px;width:512px;height:2px;background:linear-gradient(#e4e2d6,rgba(255,255,255,0))"></div>
<div style="left:519px;top:127px;width:1px;height:14px;background:#c7c5b2"></div><div style="left:520px;top:127px;width:1px;height:14px;background:#fff"></div>
<div style="left:615px;top:127px;width:1px;height:14px;background:#c7c5b2"></div><div style="left:616px;top:127px;width:1px;height:14px;background:#fff"></div>
<div style="left:735px;top:127px;width:1px;height:14px;background:#c7c5b2"></div><div style="left:736px;top:127px;width:1px;height:14px;background:#fff"></div>
<div class="t" style="left:353px;top:129px">Name</div>
<div style="left:389px;top:131px;width:0;height:0;border:5px solid transparent;border-bottom:5px solid #aca899;border-top:0"></div>
<div class="t" style="left:560px;top:129px;width:50px;text-align:right">Size</div>
<div class="t" style="left:626px;top:129px">Type</div>
<div class="t" style="left:745px;top:129px">Date Modified</div>
<div style="left:341px;top:655px;width:512px;height:17px;background:linear-gradient(#f3f1ec,#fefefb)"></div>
<div style="left:342px;top:656px;width:17px;height:15px;border:1px solid #fff;border-radius:3px;background:linear-gradient(135deg,#d4e0fc,#b4c8f8);box-shadow:inset -1px -1px 0 #a0b4e8"></div><svg style="left:346px;top:659px" width="8" height="9" viewBox="0 0 8 9"><path d="M5.500 1l-3.500 3.500l3.500 3.500" stroke="#4d6185" stroke-width="2" fill="none"/></svg>
<div style="left:836px;top:656px;width:16px;height:15px;border:1px solid #fff;border-radius:3px;background:linear-gradient(135deg,#d4e0fc,#b4c8f8);box-shadow:inset -1px -1px 0 #a0b4e8"></div><svg style="left:840px;top:659px" width="8" height="9" viewBox="0 0 8 9"><path d="M2.500 1l3.500 3.500l-3.500 3.500" stroke="#4d6185" stroke-width="2" fill="none"/></svg>
<div style="left:360px;top:656px;width:472px;height:15px;border:1px solid #fff;border-radius:3px;background:linear-gradient(#c8d8fc,#b8ccf8);box-shadow:inset -1px -1px 0 #a0b4e8"></div>
<i style="left:591px;top:660px;width:1px;height:7px;background:#8ca0d4"></i>
<i style="left:593px;top:660px;width:1px;height:7px;background:#8ca0d4"></i>
<i style="left:595px;top:660px;width:1px;height:7px;background:#8ca0d4"></i>
<i style="left:597px;top:660px;width:1px;height:7px;background:#8ca0d4"></i>
<div style="left:61px;top:671px;width:792px;height:23px;background:#ece9d8;border-top:1px solid #d8d4c4"></div>
<div class="t" style="left:63px;top:678px">0 objects (Disk free space: 46.2 GB)</div>
<div style="left:617px;top:675px;width:1px;height:18px;background:#c7c5b2"></div><div style="left:618px;top:675px;width:1px;height:18px;background:#fff"></div>
<div style="left:696px;top:675px;width:1px;height:18px;background:#c7c5b2"></div><div style="left:697px;top:675px;width:1px;height:18px;background:#fff"></div>
<div class="t" style="left:623px;top:678px">0 bytes</div>
<svg style="left:703px;top:675px" width="14" height="17" viewBox="0 0 14 17"><rect x="2" y="1" width="10" height="9" rx="1.500" fill="#7cb4f0" stroke="#4c78c0"/><rect x="4" y="11" width="6" height="4" fill="#c8d4e8" stroke="#7c8cac"/></svg>
<div class="t" style="left:721px;top:678px">My Computer</div>
<i style="left:849px;top:682px;width:2px;height:2px;background:#b8b4a0"></i>
<i style="left:845px;top:686px;width:2px;height:2px;background:#b8b4a0"></i>
<i style="left:849px;top:686px;width:2px;height:2px;background:#b8b4a0"></i>
<i style="left:841px;top:690px;width:2px;height:2px;background:#b8b4a0"></i>
<i style="left:845px;top:690px;width:2px;height:2px;background:#b8b4a0"></i>
<i style="left:849px;top:690px;width:2px;height:2px;background:#b8b4a0"></i>
<svg style="left:257px;top:626px" width="26" height="44" viewBox="0 0 26 44"><path d="M1.500 1.500v33l7.500-7l6 14l5.500-2.500l-6-13.500h10z" fill="#fff" stroke="#000" stroke-width="1.600" stroke-linejoin="miter"/></svg>
</div>
<!-- TASKBAR -->
<div class="g" id="taskbar">
<div style="left:0;top:704px;width:1024px;height:64px;background:linear-gradient(#1f52c4 0,#3a7af0 3px,#2c68e4 7px,#2663e0 12px,#2561dd 50px,#2158d2 60px,#1c48b4 64px)"></div>
<div style="left:-12px;top:708px;width:109px;height:30px;border-radius:0 9px 10px 0/0 12px 13px 0;background:linear-gradient(#6cc06c 0,#44a844 12%,#3ca03c 40%,#389c38 75%,#2c842c 100%);box-shadow:inset 0 2px 3px #88d088,inset -3px -3px 4px #206820,1px 0 2px #183c90"></div>
<svg style="left:9px;top:713px" width="21" height="19" viewBox="0 0 21 19"><path d="M2.500 2.500c3-1.500 5-1 7 0l-1.600 6c-2-1-4-1.400-7 .2z" fill="#f0683c"/><path d="M10.600 3c2 1 4.500 1.300 7.400-.3l-1.700 6c-3 1.600-5 1.200-7.300.2z" fill="#8cd048"/><path d="M.700 9.700c3-1.500 5-1.100 7 0l-1.600 6c-2-1-4-1.400-7 .2z" fill="#5c98f0"/><path d="M8.700 10.300c2 1 4.500 1.300 7.400-.3l-1.700 6c-3 1.600-5 1.200-7.300.2z" fill="#fcd040"/></svg>
<div class="t" style="left:34px;top:711px;color:#fff;font:italic bold 18px/22px 'Liberation Sans',sans-serif;text-shadow:1px 1px 2px #205020;letter-spacing:.2px">start</div>
<div style="left:106px;top:714px;width:2px;height:52px;background:repeating-linear-gradient(#1840a8 0,#1840a8 2px,transparent 2px,transparent 6px)"></div>
<div style="left:109px;top:717px;width:2px;height:49px;background:repeating-linear-gradient(#1840a8 0,#1840a8 2px,transparent 2px,transparent 6px)"></div>
<div class="tb" style="left:116px;top:712px;width:157px;height:23px;box-shadow:inset 0 0 0 1px #4c88f0"><div class="t" style="left:30px;top:4px">C:\jon\dl</div></div>
<svg style="left:126px;top:716px" width="16" height="15" viewBox="0 0 16 15"><path d="M1 3.500q0-1.500 1.500-1.500h3l1.500 1.500h6.500q1.500 0 1.500 1.500v8.500h-14z" fill="url(#gf)" stroke="#c08828" stroke-width=".8"/><path d="M8.500 5.500h5.500M8.500 7.500h4" stroke="#fff4b8" stroke-width="1"/><circle cx="5.500" cy="7" r="2.700" fill="#cce6fa" stroke="#f4ecd0" stroke-width="1"/></svg>
<div class="tb" style="left:274px;top:712px;width:157px;height:23px;box-shadow:inset 0 0 0 1px #4c88f0"><div class="t" style="left:30px;top:4px">Paint Shop Pro - Bro...</div></div>
<svg style="left:284px;top:715px" width="17" height="17" viewBox="0 0 17 17"><ellipse cx="8" cy="8" rx="7.500" ry="5.500" transform="rotate(20 8 8)" fill="#f0a848" stroke="#a05818"/><circle cx="5" cy="6" r="1.500" fill="#e02020"/><circle cx="9" cy="5.500" r="1.500" fill="#2040e0"/><circle cx="12" cy="8" r="1.500" fill="#20a020"/><path d="M1 1l13 13" stroke="#402010" stroke-width="1.600"/><path d="M13 12l3 4" stroke="#000" stroke-width="2"/></svg>
<div class="tb" style="left:432px;top:712px;width:157px;height:23px;box-shadow:inset 0 0 0 1px #4c88f0"><div class="t" style="left:30px;top:4px">ftp://ftp.jleslie48.co...</div></div>
<svg style="left:442px;top:716px" width="16" height="15" viewBox="0 0 16 15"><path d="M1 3.500q0-1.500 1.500-1.500h3l1.500 1.500h6.500q1.500 0 1.500 1.500v8.500h-14z" fill="url(#gf)" stroke="#c08828" stroke-width=".8"/><path d="M8.500 5.500h5.500M8.500 7.500h4" stroke="#fff4b8" stroke-width="1"/><circle cx="5.500" cy="7" r="2.700" fill="#cce6fa" stroke="#f4ecd0" stroke-width="1"/></svg>
<div class="tb" style="left:590px;top:712px;width:157px;height:23px;box-shadow:inset 0 0 0 1px #4c88f0"><div class="t" style="left:30px;top:4px">jld - Cathy</div></div>
<svg style="left:600px;top:715px" width="18" height="17" viewBox="0 0 18 17"><path d="M1 9l8-7v4h6l-3 4l4 5h-7v-3z" fill="#30d030" stroke="#083808" stroke-width="1.400" stroke-linejoin="round"/></svg>
<div class="tb" style="left:748px;top:712px;width:157px;height:23px;box-shadow:inset 0 0 0 1px #4c88f0"><div class="t" style="left:30px;top:4px">nydev4_172.24.83.1...</div></div>
<svg style="left:758px;top:715px" width="17" height="16" viewBox="0 0 17 16"><rect x="1" y="1" width="15" height="14" rx="4" fill="#fff" stroke="#304878" stroke-width="1.400"/><text x="8.500" y="11" font-family="Liberation Sans,sans-serif" font-size="7" font-weight="bold" text-anchor="middle" fill="#203050">VT</text></svg>
<div class="tb" style="left:116px;top:742px;width:157px;height:23px;background:linear-gradient(#f89838,#ee7e14 20%,#ea7810 80%,#d46808);box-shadow:inset 0 0 0 1px #f4a850"><div class="t" style="left:30px;top:5px">Jonathan Leslie - Inb...</div></div>
<svg style="left:126px;top:745px" width="17" height="17" viewBox="0 0 17 17"><circle cx="8.500" cy="8.500" r="7.500" fill="#f09010" stroke="#c06000"/><circle cx="8.500" cy="8.500" r="5.500" fill="none" stroke="#ffe0a0" stroke-width="1.200"/><path d="M5 6h7M8.500 6v7M6 8v5M11 8v5" stroke="#ffe0a0" stroke-width="1.200"/></svg>
<div class="tb" style="left:274px;top:742px;width:157px;height:23px;box-shadow:inset 0 0 0 1px #4c88f0"><div class="t" style="left:30px;top:5px">Windows Task Manager</div></div>
<svg style="left:284px;top:745px" width="17" height="17" viewBox="0 0 17 17"><rect x="2.500" y="1.500" width="12" height="9" fill="#e8e8e0" stroke="#404040"/><rect x="4.500" y="3.500" width="8" height="5" fill="#000"/><path d="M5 6.500l2-1.500l2 2l3-2" stroke="#20e020" stroke-width="1" fill="none"/><path d="M1.500 12.500h14v3h-14z" fill="#d8d8d0" stroke="#404040"/></svg>
<div class="tb" style="left:432px;top:742px;width:157px;height:23px;box-shadow:inset 0 0 0 1px #4c88f0"><div class="t" style="left:30px;top:5px">Yahoo! Image Searc...</div></div>
<svg style="left:442px;top:745px" width="17" height="17" viewBox="0 0 17 17"><circle cx="8.500" cy="8.500" r="7" fill="#3858c8"/><path d="M2 5c1 9 8 12 13 6c1-3 0-7-3-9c1 3-1 4-3 3c-2-1-4 0-3 3c-2-1-3-2-4-3z" fill="#f08018"/><path d="M2 6c0 6 6 10 11 7" stroke="#f8c020" stroke-width="1.500" fill="none"/></svg>
<div class="tb" style="left:590px;top:742px;width:157px;height:23px;background:linear-gradient(#1c48a8,#1e52b8 25%,#2058c0 100%);box-shadow:inset 1px 1px 1px #163c90"><div class="t" style="left:30px;top:5px">C:\jon\dl\egiftshop_...</div></div>
<svg style="left:600px;top:746px" width="16" height="15" viewBox="0 0 16 15"><path d="M1 3.500q0-1.500 1.500-1.500h3l1.500 1.500h6.500q1.500 0 1.500 1.500v8.500h-14z" fill="url(#gf)" stroke="#c08828" stroke-width=".8"/><path d="M8.500 5.500h5.500M8.500 7.500h4" stroke="#fff4b8" stroke-width="1"/><circle cx="5.500" cy="7" r="2.700" fill="#cce6fa" stroke="#f4ecd0" stroke-width="1"/></svg>
<div class="tb" style="left:748px;top:742px;width:157px;height:23px;box-shadow:inset 0 0 0 1px #4c88f0"><div class="t" style="left:30px;top:5px">Yahoo! Image Detail ...</div></div>
<svg style="left:758px;top:745px" width="17" height="17" viewBox="0 0 17 17"><circle cx="8.500" cy="8.500" r="7" fill="#3858c8"/><path d="M2 5c1 9 8 12 13 6c1-3 0-7-3-9c1 3-1 4-3 3c-2-1-4 0-3 3c-2-1-3-2-4-3z" fill="#f08018"/><path d="M2 6c0 6 6 10 11 7" stroke="#f8c020" stroke-width="1.500" fill="none"/></svg>
<div style="left:920px;top:705px;width:104px;height:63px;background:linear-gradient(#1470d0 0,#2ca0f4 3px,#1e94ee 8px,#1a8ce8 50px,#1884e0 60px,#1468c0 63px);border-left:1px solid #1458b8;box-shadow:inset 1px 0 0 #38a8f4"></div>
<div style="left:911px;top:729px;width:19px;height:19px;border-radius:10px;background:radial-gradient(circle at 35% 30%,#a8dcfc 0,#48a0f0 50%,#2070d8 100%);border:1px solid #d8ecfc"></div>
<svg style="left:916px;top:734px" width="8" height="9" viewBox="0 0 8 9"><path d="M5.500 1l-3.500 3.500l3.500 3.500" stroke="#fff" stroke-width="2" fill="none"/></svg>
<div style="left:934px;top:713px;width:12px;height:13px;background:#208020;border-right:1px solid #fff;border-bottom:1px solid #fff;background-image:repeating-linear-gradient(90deg,rgba(0,40,0,.5) 0,rgba(0,40,0,.5) 1px,transparent 1px,transparent 2px)"></div>
<svg style="left:931px;top:729px" width="16" height="17" viewBox="0 0 16 17"><path d="M4 1h8v3l3 0l-3 3v3l3 0l-3 3v3h-8v-3l-3-3h3v-3l-3-3h3z" fill="#181818"/><circle cx="8" cy="4" r="2" fill="#a02020"/><circle cx="8" cy="8.500" r="2" fill="#b08020"/><circle cx="8" cy="13" r="2.400" fill="#40f040"/></svg>
<svg style="left:930px;top:747px" width="18" height="18" viewBox="0 0 18 18"><path d="M6 1h6l5 5v6l-5 5h-6l-5-5v-6z" fill="#1010e0"/><path d="M1 10h4l1.500-4l2 7l2-7l1.500 4h5" stroke="#fff" stroke-width="1.300" fill="none"/></svg>
<div class="t" style="left:942px;top:713px;width:80px;text-align:center;color:#fff;font-size:11.200px;letter-spacing:0">10:08 AM</div>
<div class="t" style="left:942px;top:732px;width:80px;text-align:center;color:#fff;font-size:11.200px;letter-spacing:0">Friday</div>
<div class="t" style="left:942px;top:750px;width:80px;text-align:center;color:#fff;font-size:11.200px;letter-spacing:0">10/13/2006</div>
</div>
</body>
</html>
